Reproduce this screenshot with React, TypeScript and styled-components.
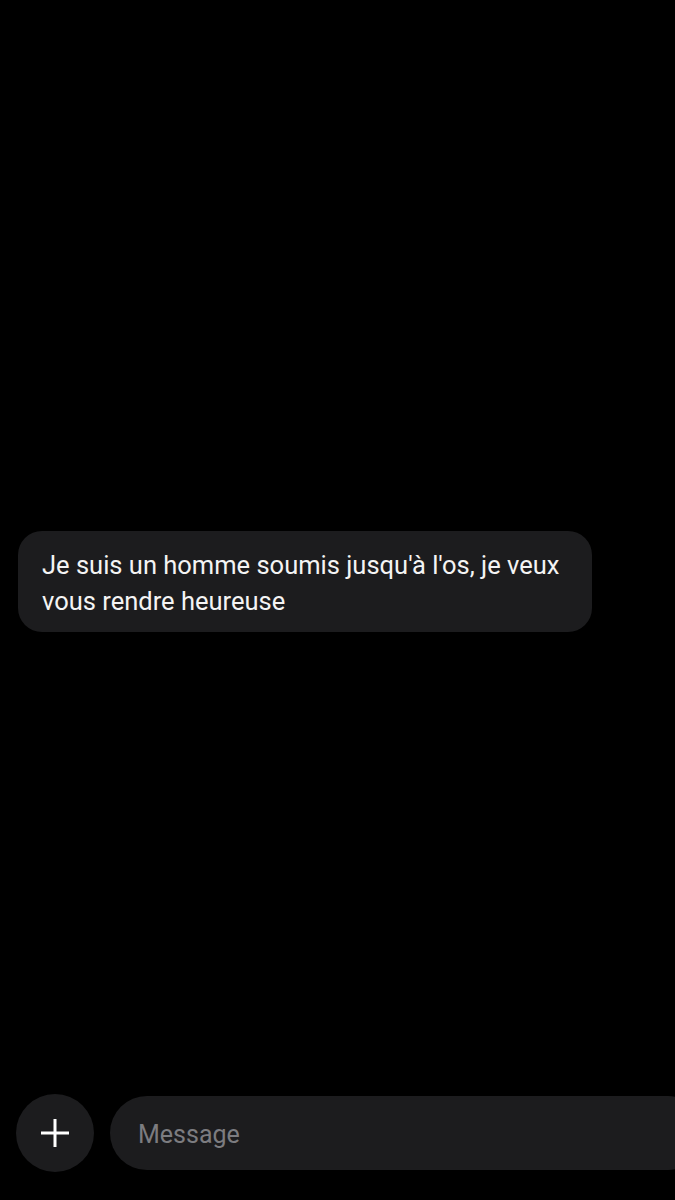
import React from 'react';
import styled, { createGlobalStyle } from 'styled-components';

const GlobalStyle = createGlobalStyle`
  html, body {
    margin: 0;
    padding: 0;
    background: #000;
  }
  * {
    box-sizing: border-box;
  }
`;

const Screen = styled.div`
  width: 675px;
  height: 1200px;
  background: #000;
  display: flex;
  flex-direction: column;
  overflow: hidden;
  font-family: Roboto, 'Liberation Sans', sans-serif;
`;

const Thread = styled.div`
  flex: 1;
  padding: 531px 0 0 18px;
`;

const Bubble = styled.div`
  width: 574px;
  background: #1c1c1e;
  border-radius: 24px;
  padding: 16px 24px 13px 24px;
  color: #f4f4f4;
  font-size: 25.5px;
  line-height: 36px;
`;

const Composer = styled.div`
  display: flex;
  align-items: center;
  gap: 16px;
  padding: 0 0 28px 16px;
`;

const PlusButton = styled.div`
  width: 78px;
  height: 78px;
  flex-shrink: 0;
  border-radius: 50%;
  background: #1c1c1e;
  display: flex;
  align-items: center;
  justify-content: center;
`;

const Field = styled.div`
  flex: 1;
  height: 74px;
  margin-right: -30px;
  border-radius: 37px;
  background: #1c1c1e;
  display: flex;
  align-items: center;
  padding: 2px 0 0 28px;
  color: #7c7c80;
  font-size: 25px;
`;

const App: React.FC = () => {
  return (
    <Screen>
      <GlobalStyle />
      <Thread>
        <Bubble>
          Je suis un homme soumis jusqu'à l'os, je veux
          <br />
          vous rendre heureuse
        </Bubble>
      </Thread>
      <Composer>
        <PlusButton>
          <svg width="32" height="32" viewBox="0 0 32 32">
            <path d="M16 2v28M2 16h28" stroke="#fff" strokeWidth="3" />
          </svg>
        </PlusButton>
        <Field>Message</Field>
      </Composer>
    </Screen>
  );
};

export default App;
